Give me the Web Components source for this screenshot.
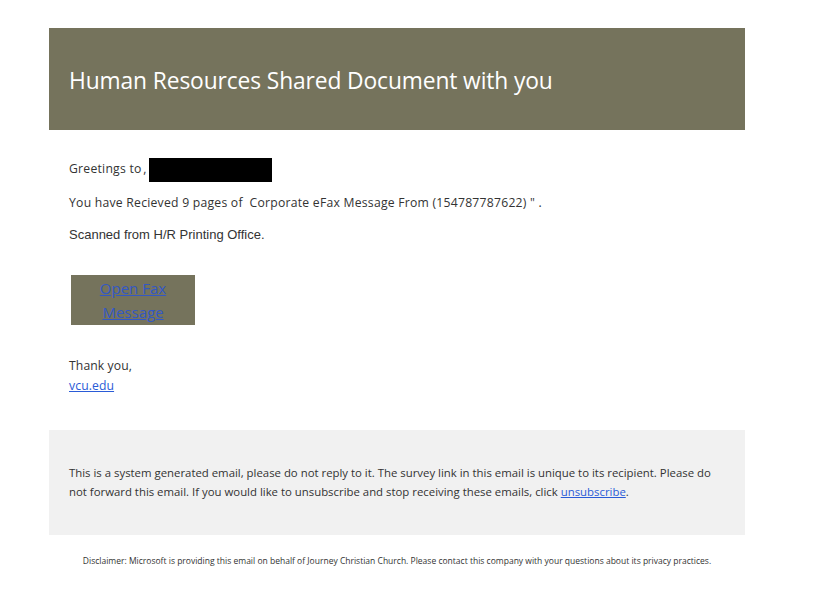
<!DOCTYPE html>
<html lang="en">
<head>
<meta charset="utf-8">
<title>Human Resources Shared Document with you</title>
<style>
  html, body { background: #fff; }
  body { margin: 0; padding: 28px 0 0 49px; font-family: "Open Sans", "Liberation Sans", sans-serif; color: #333; }
</style>
</head>
<body>
<mail-card>
  <mail-header>Human Resources Shared Document with you</mail-header>
  <mail-body>
    <div class="greeting">Greetings to<span style="letter-spacing:-1.4px"> </span>,<span style="letter-spacing:-0.6px"> </span><redact-box></redact-box></div>
  </mail-body>
  <mail-footer></mail-footer>
  <mail-disclaimer>Disclaimer: Microsoft is providing this email on behalf of Journey Christian Church. Please contact this company with your questions about its privacy practices.</mail-disclaimer>
</mail-card>

<script>
class MailCard extends HTMLElement {
    constructor() {
        super();
        this.attachShadow({mode: 'open'}).innerHTML = `
          <style>
            :host { display: flex; flex-direction: column; width: 696px; }
          </style>
          <slot></slot>`;
    }
}

class MailHeader extends HTMLElement {
    constructor() {
        super();
        this.attachShadow({mode: 'open'}).innerHTML = `
          <style>
            :host {
              display: flex; align-items: center; height: 102px; box-sizing: border-box;
              padding: 2px 20px 0; background: #75735c; color: #fff;
              font-size: 22.8px; letter-spacing: -0.12px;
            }
          </style>
          <slot></slot>`;
    }
}

class RedactBox extends HTMLElement {
    constructor() {
        super();
        this.attachShadow({mode: 'open'}).innerHTML = `
          <style>
            :host { display: block; width: 123px; height: 24px; background: #000; }
          </style>`;
    }
}

class MailBody extends HTMLElement {
    constructor() {
        super();
        this.attachShadow({mode: 'open'}).innerHTML = `
          <style>
            :host { display: flex; flex-direction: column; padding: 28px 20px 0; height: 300px; box-sizing: border-box;
              font-size: 12.2px; letter-spacing: 0.24px; color: #333; }
            .line { height: 24px; display: flex; align-items: center; white-space: pre; }
            .scanned { margin-top: 8px; font-family: "Liberation Sans", sans-serif; font-size: 13px; letter-spacing: 0; color: #333; }
            .cta { width: 124px; margin: 29px 0 0 2px; padding: 1px 0; background: #75735c; text-align: center;
              font-size: 15px; letter-spacing: 0; line-height: 24px; }
            .cta a { color: #3358c4; }
            .sign { margin-top: 31px; line-height: 20px; letter-spacing: 0.1px; }
            .sign a { color: #2a5bd7; }
            ::slotted(.greeting) { display: flex; align-items: flex-start; height: 24px; line-height: 22px; white-space: pre; }
          </style>
          <slot></slot>
          <div class="line" style="margin-top:8px">You have Recieved 9 pages of  Corporate eFax Message From (154787787622) " .</div>
          <div class="line scanned">Scanned from H/R Printing Office.</div>
          <div class="cta"><a href="#">Open Fax Message</a></div>
          <div class="sign">Thank you,<br><a href="#">vcu.edu</a></div>`;
    }
}

class MailFooter extends HTMLElement {
    constructor() {
        super();
        this.attachShadow({mode: 'open'}).innerHTML = `
          <style>
            :host { display: flex; align-items: center; height: 105px; box-sizing: border-box; padding: 0 20px 2px;
              background: #f1f1f1; font-size: 11.38px; line-height: 19px; color: #333; }
            a { color: #2a5bd7; }
          </style>
          <div>This is a system generated email, please do not reply to it. The survey link in this email is unique to its recipient. Please do not forward this email. If you would like to unsubscribe and stop receiving these emails, click <a href="#">unsubscribe</a>.</div>`;
    }
}

class MailDisclaimer extends HTMLElement {
    constructor() {
        super();
        this.attachShadow({mode: 'open'}).innerHTML = `
          <style>
            :host { display: block; margin-top: 19px; text-align: center; font-size: 8.52px; line-height: 14px; color: #333; }
          </style>
          <slot></slot>`;
    }
}

customElements.define('mail-card', MailCard);
customElements.define('mail-header', MailHeader);
customElements.define('redact-box', RedactBox);
customElements.define('mail-body', MailBody);
customElements.define('mail-footer', MailFooter);
customElements.define('mail-disclaimer', MailDisclaimer);
</script>
</body>
</html>
